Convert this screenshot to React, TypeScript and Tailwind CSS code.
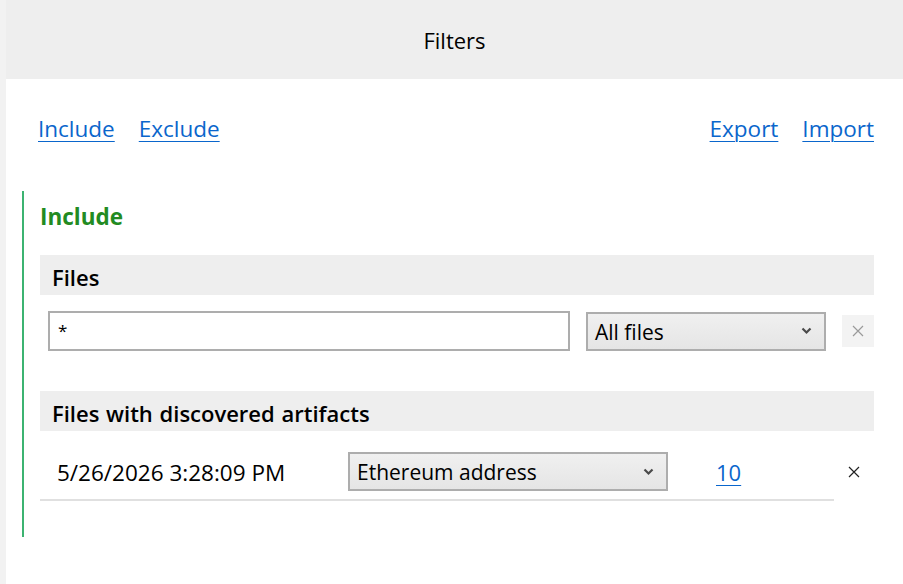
import React from "react";

const font = { fontFamily: '"Open Sans", "Noto Sans", sans-serif' };

function Chevron() {
  return (
    <svg width="11" height="8" viewBox="0 0 11 8" className="shrink-0">
      <polyline points="1.5,1.5 5.5,5.5 9.5,1.5" fill="none" stroke="#4a4a4a" strokeWidth="2.2" />
    </svg>
  );
}

function Select({ value, width }: { value: string; width: string }) {
  return (
    <div
      className={`${width} h-[39px] flex items-center justify-between pl-[7px] pr-[12px] border-2 border-[#adadad] bg-gradient-to-b from-[#f0f0f0] to-[#e5e5e5] text-[21px] text-black`}
    >
      <span className="leading-none pt-[2px]">{value}</span>
      <Chevron />
    </div>
  );
}

function Band({ title }: { title: string }) {
  return (
    <div className="h-10 bg-[#eeeeee] flex items-center pl-3 pt-[4px] text-[22px] font-semibold text-black [word-spacing:1px]">
      {title}
    </div>
  );
}

export default function App() {
  return (
    <div className="flex min-h-[584px] bg-white" style={font}>
      <div className="w-[6px] bg-[#f2f2f2]" />
      <div className="flex-1 flex flex-col">
        <div className="h-[79px] bg-[#eeeeee] flex items-center justify-center pt-[2px] text-[22px] text-black">
          Filters
        </div>

        <div className="flex items-center justify-between pl-8 pr-[29px] mt-[36px] text-[22.5px] leading-7 text-[#0a66cc]">
          <div className="flex gap-6">
            <a className="underline underline-offset-4 decoration-1">Include</a>
            <a className="underline underline-offset-4 decoration-1">Exclude</a>
          </div>
          <div className="flex gap-6">
            <a className="underline underline-offset-4 decoration-1">Export</a>
            <a className="underline underline-offset-4 decoration-1">Import</a>
          </div>
        </div>

        <div className="ml-4 mr-[29px] mt-[48px] border-l-2 border-[#3cb371] pl-4 pb-[36px]">
          <div className="pt-[12px] h-[64px] text-[22.5px] font-bold text-[#228b22] leading-7">Include</div>

          <Band title="Files" />
          <div className="flex items-center mt-4 ml-2 gap-4">
            <div className="flex-1 h-10 border-2 border-[#adadad] flex items-center pl-[8px] text-[17px] text-black">
              *
            </div>
            <Select value="All files" width="w-[240px]" />
            <div className="w-8 h-8 bg-[#f3f3f3] flex items-center justify-center">
              <svg width="12" height="12" viewBox="0 0 12 12">
                <path d="M1 1 L11 11 M11 1 L1 11" stroke="#9a9a9a" strokeWidth="1.2" />
              </svg>
            </div>
          </div>

          <div className="mt-10">
            <Band title="Files with discovered artifacts" />
          </div>
          <div className="flex items-start">
            <div className="w-[794px] pt-[21px] pb-[8px] border-b-2 border-[#e0e0e0] flex items-center">
              <span className="w-[308px] pl-[17px] pt-[2px] text-[22.5px] text-black">5/26/2026 3:28:09 PM</span>
              <Select value="Ethereum address" width="w-[320px]" />
              <a className="ml-[48px] pt-[2px] text-[22px] text-[#0a66cc] underline underline-offset-4 decoration-1">10</a>
            </div>
            <div className="flex-1 flex justify-center pt-[35px]">
              <svg width="12" height="12" viewBox="0 0 12 12">
                <path d="M1 1 L11 11 M11 1 L1 11" stroke="#222" strokeWidth="1.2" />
              </svg>
            </div>
          </div>
        </div>
      </div>
    </div>
  );
}
